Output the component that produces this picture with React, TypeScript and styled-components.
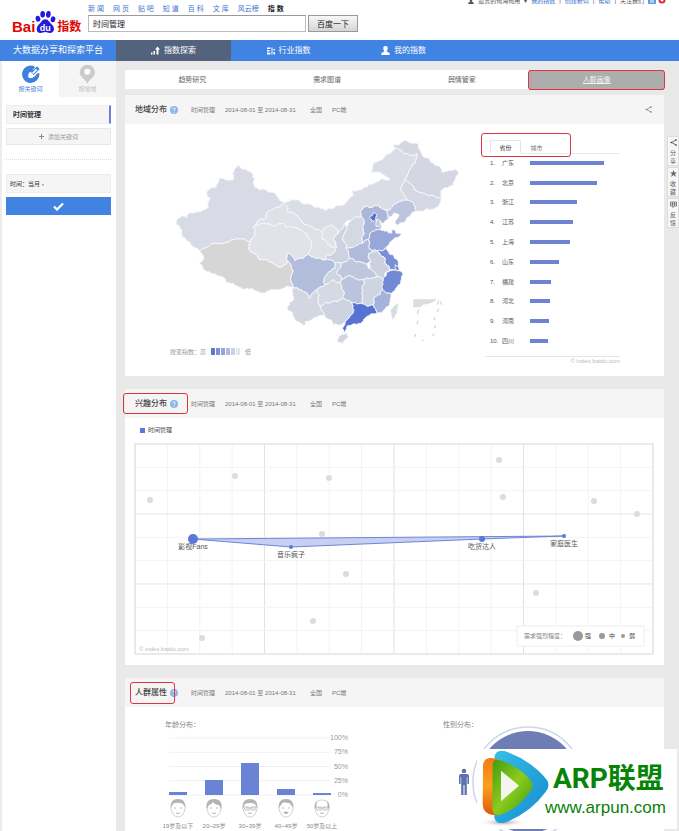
import React from "react";
import styled, { createGlobalStyle, css } from "styled-components";

const GlobalStyle = createGlobalStyle`
  *, *::after { box-sizing: border-box; }
  body { margin: 0; background: #fff; }
  body, button, input { font-family: "Liberation Sans", "Noto Sans CJK SC", sans-serif; }
  button { padding: 0; border: 0; background: none; color: inherit; cursor: pointer; }
  a { color: inherit; text-decoration: none; }
  svg { display: block; }
  h1, h2, h3, p, ol { margin: 0; padding: 0; font-weight: normal; }
`;

/* ---------- shell ---------- */
const Page = styled.div`
  position: relative;
  height: 100vh;
  overflow: hidden;
  display: flex;
  flex-direction: column;
  color: #555;
  font-size: 6px;
  line-height: 8px;
`;
const Header = styled.header`
  height: 40px;
  flex: none;
  display: flex;
  padding-left: 12px;
`;
const Logo = styled.a`
  display: flex;
  align-items: flex-end;
  width: 76px;
  height: 35px;
  color: #e10602;
  font-weight: bold;
  font-size: 15px;
  line-height: 16px;
`;
const LogoCn = styled.span`
  margin-left: 1px;
  font-size: 12px;
  line-height: 15px;
`;
const SearchArea = styled.div`
  padding-top: 4px;
`;
const Products = styled.nav`
  display: flex;
  gap: 9px;
  font-size: 7px;
  line-height: 9px;
  color: #3d74cf;
  margin-bottom: 2px;
`;
const CurrentProduct = styled.strong`
  color: #222;
`;
const SearchForm = styled.form`
  display: flex;
  gap: 2px;
`;
const SearchInput = styled.input`
  width: 218px;
  height: 17px;
  border: 1px solid #bbb;
  border-top-color: #999;
  border-radius: 0;
  padding: 0 4px;
  font-size: 8px;
  color: #222;
  outline: none;
`;
const SearchButton = styled.button`
  width: 50px;
  height: 17px;
  border: 1px solid #999;
  background: linear-gradient(#f7f7f7, #d5d5d5);
  font-size: 8px;
  color: #222;
`;
const Account = styled.div`
  display: flex;
  align-items: center;
  gap: 4px;
  height: 8px;
  margin: -3px 13px 0 auto;
  color: #555;
  white-space: nowrap;
`;
const AccountLink = styled.a`
  color: #3d74cf;
`;
const MainNav = styled.nav`
  flex: none;
  height: 21px;
  display: flex;
  background: #4183e2;
  color: #fff;
  font-size: 8px;
`;
const Slogan = styled.div`
  width: 116px;
  flex: none;
  padding-left: 13px;
  font-size: 9px;
  line-height: 21px;
`;
const NavItem = styled.a<{ $active?: boolean }>`
  width: 115px;
  display: flex;
  align-items: center;
  justify-content: center;
  gap: 4px;
  background: ${(p) => (p.$active ? "#54637d" : "transparent")};
`;
const Columns = styled.div`
  flex: 1;
  min-height: 0;
  display: flex;
`;

/* ---------- sidebar ---------- */
const Sidebar = styled.aside`
  width: 116px;
  flex: none;
  border-left: 2px solid #ececec;
  background: #fff;
`;
const ModeTabs = styled.div`
  display: grid;
  grid-template-columns: 1fr 1fr;
  height: 36px;
  margin-bottom: 8px;
`;
const ModeTab = styled.button<{ $active?: boolean }>`
  display: flex;
  flex-direction: column;
  align-items: center;
  justify-content: space-between;
  padding: 3px 0 4px;
  font-size: 6px;
  line-height: 8px;
  color: ${(p) => (p.$active ? "#3f7fdd" : "#c2c2c2")};
  background: ${(p) => (p.$active ? "#fff" : "#f5f5f5")};
`;
const SideBody = styled.div`
  display: flex;
  flex-direction: column;
  padding: 0 5px 0 4px;
`;
const Keyword = styled.div`
  height: 19px;
  padding-left: 6px;
  background: #f5f5f5;
  border: 1px solid #eee;
  border-right: 2px solid #6f7ed6;
  font-size: 7px;
  font-weight: bold;
  line-height: 17px;
  color: #333;
`;
const AddKeyword = styled.button`
  height: 17px;
  margin-top: 4px;
  display: flex;
  align-items: center;
  justify-content: center;
  gap: 4px;
  border: 1px solid #e8e8e8;
  background: #f5f5f5;
  font-size: 6px;
  color: #999;
`;
const Divider = styled.hr`
  width: 100%;
  margin: 14px 0;
  border: 0;
  border-top: 1px dotted #ddd;
`;
const TimeButton = styled.button`
  height: 19px;
  padding-left: 3px;
  border: 1px solid #ededed;
  background: #f5f5f5;
  font-size: 6px;
  text-align: left;
  color: #333;
`;
const Confirm = styled.button`
  height: 18px;
  margin-top: 4px;
  display: flex;
  align-items: center;
  justify-content: center;
  background: #4083e1;
`;

/* ---------- content ---------- */
const Main = styled.main`
  position: relative;
  flex: 1;
  min-width: 0;
  padding: 9px 15px 0 9px;
  background: #e9e9e9;
`;
const redRing = css`
  content: "";
  position: absolute;
  border: 1px solid #dc3440;
  border-radius: 3px;
  pointer-events: none;
`;
const ReportTabs = styled.nav`
  display: grid;
  grid-template-columns: repeat(4, 1fr);
  height: 19px;
  margin-bottom: 6px;
  background: #fff;
  font-size: 7px;
  line-height: 20px;
  text-align: center;
  color: #666;
`;
const ReportTab = styled.a<{ $active?: boolean }>`
  position: relative;
  ${(p) =>
    p.$active &&
    css`
      background: #adadad;
      color: #f4f4f4;
      text-decoration: underline;
      &::after { ${redRing} inset: 0 -1px 0 -1px; }
    `}
`;
const Card = styled.section`
  background: #fff;
  margin-bottom: 13px;
`;
const CardHead = styled.header`
  display: flex;
  align-items: center;
  height: 29px;
  padding: 0 12px 0 10px;
  background: #f5f5f5;
  color: #777;
`;
const TitleBox = styled.div<{ $ring?: "wide" | "tight" }>`
  position: relative;
  display: flex;
  align-items: center;
  gap: 3px;
  width: 56px;
  &::after {
    ${(p) => p.$ring && redRing}
    ${(p) => (p.$ring === "wide" ? "inset: -5px 3px -5px -12px;" : "inset: -5px 16px -6px -5px;")}
  }
`;
const CardTitle = styled.h2`
  font-size: 8px;
  line-height: 11px;
  color: #444;
  font-weight: 500;
`;
const Meta = styled.div`
  display: flex;
  gap: 10px;
  flex: 1;
  white-space: nowrap;
`;
const MetaDate = styled.span`
  width: 75px;
`;
const IconButton = styled.button`
  display: flex;
`;

/* region card */
const RegionBody = styled.div`
  display: grid;
  grid-template-columns: minmax(0, 1fr) 135px;
  column-gap: 15px;
  height: 252px;
  padding: 6px 44px 0 35px;
`;
const MapLegend = styled.div`
  display: flex;
  align-items: center;
  gap: 5px;
  padding-left: 10px;
  margin-top: 1px;
  color: #999;
`;
const Swatches = styled.div`
  display: flex;
  gap: 1px;
`;
const Swatch = styled.i<{ $color: string }>`
  width: 4px;
  height: 7px;
  background: ${(p) => p.$color};
`;
const RankTabs = styled.div`
  position: relative;
  display: flex;
  margin: 10px 0 0 5px;
  height: 14px;
  border-bottom: 1px solid #eaeaea;
  &::after { ${redRing} left: -9px; top: -7px; width: 90px; height: 24px; }
`;
const RankTab = styled.button<{ $active?: boolean }>`
  width: 31px;
  height: 14px;
  font-size: 6px;
  color: #777;
  border: 1px solid transparent;
  ${(p) =>
    p.$active &&
    css`
      border-color: #e5e5e5;
      border-bottom-color: #fff;
      color: #333;
      background: #fff;
    `}
`;
const RankList = styled.ol`
  display: grid;
  grid-template-rows: repeat(10, 1fr);
  height: 198px;
  margin-top: -1px;
  padding-left: 5px;
  list-style: none;
`;
const RankRow = styled.li`
  display: grid;
  grid-template-columns: 12px 28px 1fr;
  align-items: center;
  color: #555;
`;
const RankBar = styled.i`
  height: 4px;
  background: #6f83d3;
`;
const RankFoot = styled.p`
  border-top: 1px solid #e5e5e5;
  margin-top: 5px;
  color: #bbb;
  text-align: right;
`;

/* interest card */
const InterestBody = styled.div`
  padding: 7px 11px 10px 10px;
`;
const SeriesKey = styled.div`
  display: flex;
  align-items: center;
  gap: 3px;
  height: 10px;
  margin: 0 0 9px 5px;
  color: #444;
`;
const SeriesSquare = styled.i`
  width: 5px;
  height: 5px;
  background: #5b78d8;
`;
const ChartSvg = styled.svg`
  width: 100%;
  height: auto;
  overflow: visible;
`;

/* people card */
const PeopleBody = styled.div`
  display: grid;
  grid-template-columns: 278px 1fr;
  padding: 14px 0 0 40px;
  height: 180px;
  color: #888;
`;

/* floating tools */
const Tools = styled.div`
  position: absolute;
  right: 0;
  top: 75px;
  display: flex;
  flex-direction: column;
  gap: 1px;
`;
const Tool = styled.button`
  width: 12px;
  height: 30px;
  display: flex;
  flex-direction: column;
  align-items: center;
  gap: 3px;
  padding-top: 2px;
  border: 1px solid #ddd;
  background: #f7f7f7;
  font-size: 6px;
  line-height: 8px;
  color: #555;
`;
const Brand = styled.aside`
  position: absolute;
  left: 477px;
  bottom: 2px;
  width: 200px;
  height: 80px;
  display: flex;
  background: #fff;
  color: #078307;
`;
const BrandText = styled.div`
  margin-left: -4px;
  padding-top: 13px;
  white-space: nowrap;
`;
const BrandName = styled.div`
  margin-left: 8px;
  font: bold 28px/34px Roboto, "Noto Sans CJK SC", sans-serif;
`;
const BrandUrl = styled.div`
  font-size: 17px;
  line-height: 24px;
`;

/* ---------- map ---------- */
const provinces: [string, string, string][] = [
  ["新疆", "#d8dbe5", "50,270 65,258 80,262 110,245 145,228 150,205 140,185 168,172 175,145 195,150 220,148 215,130 238,107 262,122 285,148 285,172 300,180 325,185 350,198 372,218 350,232 320,250 310,268 280,290 285,315 272,335 240,328 190,340 150,345 118,362 95,345 75,325 65,300 50,285"],
  ["西藏", "#d6d6d7", "118,362 150,345 190,340 240,328 272,335 270,365 300,390 340,400 370,408 382,392 400,420 400,472 370,475 345,480 315,490 285,482 262,475 235,470 200,458 165,432 135,420 118,400 130,385"],
  ["青海", "#e2e3e9", "280,290 300,282 340,288 370,280 400,290 425,300 450,330 445,372 430,385 405,392 382,370 382,392 370,408 340,400 300,390 270,365 272,335 285,315"],
  ["甘肃", "#dfe1e8", "310,268 320,250 350,232 372,218 382,245 410,255 430,280 450,290 485,305 485,325 505,345 530,350 525,365 500,375 490,390 470,385 445,372 450,330 425,300 400,290 370,280 340,288 300,282 280,290"],
  ["内蒙古", "#dadde5", "372,218 430,222 470,232 520,235 560,215 580,195 575,182 620,172 660,150 690,148 665,130 635,128 640,100 670,85 690,70 705,55 730,70 770,70 765,100 745,130 735,150 722,180 740,210 700,225 680,240 665,235 655,225 610,230 605,260 575,270 555,280 535,310 512,285 500,290 485,305 450,290 430,280 410,255 382,245"],
  ["黑龙江", "#d4d7e2", "700,42 740,32 775,42 790,80 820,100 850,128 893,122 880,165 845,180 845,205 815,195 790,190 760,170 735,150 745,130 765,100 770,70 730,70 705,55"],
  ["吉林", "#d5d8e2", "735,150 760,170 790,190 815,195 845,205 840,220 800,235 768,245 755,215 740,210 722,180"],
  ["辽宁", "#bcc5dd", "680,240 700,225 740,210 755,215 768,245 740,265 715,285 705,280 718,255 700,250 685,265"],
  ["河北", "#aab6da", "610,230 655,225 665,235 680,240 685,265 670,280 660,272 660,298 630,310 625,328 605,340 608,290 605,260"],
  ["天津", "#c3cadf", "650,268 660,272 658,290 648,288"],
  ["北京", "#526ece", "628,262 640,248 652,255 648,268 635,275"],
  ["山西", "#d4d8e2", "560,290 575,270 605,260 608,290 605,340 575,355 558,355"],
  ["陕西", "#ccd2e0", "535,310 555,280 560,290 558,355 565,370 568,385 545,400 525,400 490,390 500,375 525,365 530,350 520,330"],
  ["宁夏", "#e1e3e9", "485,305 500,290 512,285 535,310 520,330 530,350 505,345 485,325"],
  ["山东", "#97a7da", "630,310 660,298 680,302 695,310 700,297 708,310 725,312 700,328 680,352 650,362 625,350 625,328"],
  ["河南", "#b0badb", "565,370 558,355 605,340 625,328 625,350 650,362 625,370 632,390 620,402 590,395 568,385"],
  ["江苏", "#7a8fd5", "650,362 680,352 700,375 715,400 712,422 690,420 675,400 670,380"],
  ["上海", "#7187d3", "706,404 716,412 714,424 706,420"],
  ["安徽", "#cbd1df", "625,370 650,362 670,380 675,400 690,420 680,425 670,448 650,440 635,420 632,390"],
  ["浙江", "#7289d5", "680,425 712,422 730,432 715,465 695,490 668,480 668,455"],
  ["湖北", "#bfc7dd", "545,400 568,385 590,395 620,402 635,420 650,440 610,450 600,450 560,440 545,450 530,430"],
  ["四川", "#b2bcdb", "382,370 405,392 430,385 445,372 470,385 490,390 525,400 525,415 500,435 490,455 495,465 470,480 450,505 435,485 400,472 400,420 382,392"],
  ["重庆", "#cfd4e1", "525,400 545,400 530,430 545,450 540,460 520,450 495,465 490,455 500,435 525,415"],
  ["贵州", "#d5d9e3", "470,480 495,465 520,450 540,460 548,505 515,515 480,530 475,510"],
  ["湖南", "#bbc4dc", "545,450 560,440 600,450 610,450 607,480 605,520 575,520 548,505 540,460"],
  ["江西", "#cfd4e1", "610,450 650,440 670,448 668,480 645,500 640,525 605,520 607,480"],
  ["福建", "#a5b2da", "668,480 695,490 690,515 650,550 640,525 645,500"],
  ["广西", "#ced3e0", "480,530 515,515 548,505 575,520 580,545 555,580 520,585 495,560"],
  ["广东", "#5773d2", "580,545 575,520 605,520 640,525 650,550 610,575 580,582 560,590 555,608 547,595 555,580"],
  ["云南", "#d3d7e2", "400,472 435,485 450,505 470,480 475,510 480,530 495,560 460,565 435,575 432,588 405,570 395,545 382,540 400,510"],
  ["海南", "#d0d5e1", "535,620 560,610 565,620 548,642 533,635"],
  ["台湾", "#d9dbe2", "700,530 715,520 712,550 700,570 693,550"],
];

type Pt = [number, number];

/* Splits each border into a ragged line; neighbours share the same result because
   the displacement depends only on the two end points. */
function ragged(a: Pt, b: Pt, depth: number): Pt[] {
  const flip = a[0] > b[0] || (a[0] === b[0] && a[1] > b[1]);
  const [p, q] = flip ? [b, a] : [a, b];
  if (depth === 0 || Math.hypot(q[0] - p[0], q[1] - p[1]) < 6) return [a];
  const s = Math.sin(p[0] * 12.9 + p[1] * 78.2 + q[0] * 37.7 + q[1] * 4.1) * 43758.5;
  const k = (s - Math.floor(s) - 0.5) * 0.42;
  const m: Pt = [(p[0] + q[0]) / 2 - (q[1] - p[1]) * k, (p[1] + q[1]) / 2 + (q[0] - p[0]) * k];
  return [...ragged(a, m, depth - 1), ...ragged(m, b, depth - 1)];
}
function outline(points: string) {
  const pts = points.split(" ").map((s) => s.split(",").map(Number) as Pt);
  return pts
    .flatMap((p, i) => ragged(p, pts[(i + 1) % pts.length], 3))
    .map((p) => p.map((n) => Math.round(n * 10) / 10).join(","))
    .join(" ");
}

const ChinaMap = () => (
  <ChartSvg viewBox="0 0 930 650" role="img" aria-label="地域分布">
    {provinces.map(([name, fill, pts]) => (
      <polygon key={name} points={outline(pts)} fill={fill} stroke="#f6f7fa" strokeWidth="3" strokeLinejoin="round" />
    ))}
    <path d="M760 508H832L812 520L790 524L780 532H760Z" fill="#dcdcdc" />
    <path d="M776 538l-4 14M774 572l-3 10M766 612v8M786 630l4 3M818 618l4-6M824 594l3-8M823 570l2-8M832 545l4-8M836 512l-4 12M842 514l3 10" stroke="#d5d5d5" strokeWidth="4" />
  </ChartSvg>
);

/* ---------- icons ---------- */
const Help = () => (
  <svg width="8" height="8" viewBox="0 0 16 16" aria-hidden="true">
    <circle cx="8" cy="8" r="8" fill="#8db5ea" />
    <path d="M5.5 6.5a2.5 2.5 0 1 1 3.6 2.2Q8 9.3 8 10.5M8 12v1.6" fill="none" stroke="#fff" strokeWidth="1.7" />
  </svg>
);
const Share = ({ size = 7, color = "#777" }: { size?: number; color?: string }) => (
  <svg width={size} height={size} viewBox="0 0 14 14" aria-hidden="true">
    <path d="M12 2L3 7l9 5" fill="none" stroke={color} strokeWidth="1.4" />
    <g fill={color}><circle cx="12" cy="2" r="1.6" /><circle cx="2.5" cy="7" r="1.6" /><circle cx="12" cy="12" r="1.6" /></g>
  </svg>
);
const Person = ({ width, height, color }: { width: number; height: number; color: string }) => (
  <svg width={width} height={height} viewBox="0 0 10 10" aria-hidden="true">
    <path d="M5 0C7 0 7.8 1.4 7.4 3.2 7 4.8 6.3 5.2 6.3 6L9.6 7.8V10H.4V7.8L3.7 6C3.7 5.2 3 4.8 2.6 3.2 2.2 1.4 3 0 5 0Z" fill={color} />
  </svg>
);
const Paw = () => (
  <svg width="21" height="25" viewBox="0 0 63 75" aria-hidden="true">
    <g fill="#2319dc">
      <ellipse cx="9" cy="26" rx="7" ry="9" transform="rotate(-12 9 26)" />
      <ellipse cx="23" cy="13" rx="7" ry="10" />
      <ellipse cx="40" cy="13" rx="7" ry="10" transform="rotate(8 40 13)" />
      <ellipse cx="54" cy="28" rx="7" ry="9" transform="rotate(14 54 28)" />
      <path d="M31 28C41 28 43 38 51 44C60 51 59 69 45 69C39 69 36 66 31 66C26 66 22 69 16 69C2 69 3 51 11 44C19 38 21 28 31 28Z" />
    </g>
    <text x="31" y="62" fill="#fff" fontSize="27" fontWeight="bold" textAnchor="middle">du</text>
  </svg>
);

/* ---------- data ---------- */
const products = ["新 闻", "网 页", "贴 吧", "知 道", "百 科", "文 库", "风云榜"];
const ranking: [string, number][] = [
  ["广东", 74], ["北京", 67], ["浙江", 47], ["江苏", 43], ["上海", 40],
  ["山东", 29], ["福建", 21], ["河北", 20], ["河南", 19], ["四川", 18],
];
const greyDots: Pt[] = [
  [15, 56], [100, 32], [194, 34], [187, 90], [211, 130], [178, 177],
  [67, 194], [364, 16], [368, 53], [459, 57], [502, 70], [401, 149],
];
const interests: [string, number, number, number][] = [
  ["影视Fans", 58, 95, 5], ["音乐疯子", 156, 103, 2], ["吃货达人", 347, 95, 3], ["家庭医生", 429, 92, 2],
];
const ages: [string, number][] = [
  ["19岁及以下", 3], ["20~29岁", 15], ["30~39岁", 32], ["40~49岁", 6], ["50岁及以上", 2],
];
const hair = [
  "M-7 0Q-8-9 0-9Q8-9 7 0Q6-4 3-5Q-3-6-5-4Z",
  "M-7 1Q-9-9 0-9Q9-9 7 1L5-3Q1-3-1-6Q-3-3-5-3Z",
  "M-7 0Q-8-9 0-9Q8-9 7 0L5-4Q0-6-5-4Z",
  "M-7 0Q-8-9 0-9Q8-9 7 0L5-3Q3-6 1-5Q-3-7-5-3Z",
  "M-7 1Q-8-5-5-7L-6 0ZM7 1Q8-5 5-7L6 0Z",
];

const Head = ({ title, ring, share }: { title: string; ring?: "wide" | "tight"; share?: boolean }) => (
  <CardHead>
    <TitleBox $ring={ring}><CardTitle>{title}</CardTitle><Help /></TitleBox>
    <Meta><span>时间管理</span><MetaDate>2014-08-01 至 2014-08-31</MetaDate><span>全国</span><span>PC端</span></Meta>
    {share && <IconButton aria-label="分享"><Share /></IconButton>}
  </CardHead>
);

const InterestChart = () => (
  <ChartSvg viewBox="0 0 518 211" role="img" aria-label="兴趣分布">
    {Array.from({ length: 17 }, (_, i) => (
      <line key={`v${i}`} x1={i * 32.375} x2={i * 32.375} y1="0" y2="210" stroke={i % 4 ? "#f3f3f3" : "#e2e2e2"} />
    ))}
    {Array.from({ length: 10 }, (_, i) => (
      <line key={`h${i}`} x1="0" x2="518" y1={i * 23.33} y2={i * 23.33} stroke={i % 3 ? "#f3f3f3" : "#e6e6e6"} />
    ))}
    <rect x="0" y="0" width="518" height="210" fill="none" stroke="#e2e2e2" />
    {greyDots.map(([x, y]) => <circle key={`${x}-${y}`} cx={x} cy={y} r="3" fill="#dcdcdc" />)}
    <path d="M58 95L429 92L347 95L156 103Z" fill="#c6d0f3" stroke="#7084d6" strokeLinejoin="round" />
    {interests.map(([name, x, y, r]) => (
      <g key={name}>
        <circle cx={x} cy={y} r={r} fill="#5b78d8" />
        <text x={x} y={y + 10} fontSize="7" textAnchor="middle" fill="#555">{name}</text>
      </g>
    ))}
    <text x="4" y="207" fontSize="6" fill="#bbb">© index.baidu.com</text>
    <rect x="382" y="182" width="127" height="20" fill="#fff" stroke="#eee" />
    <g fontSize="6" fill="#888">
      <text x="389" y="194">需求强烈程度：</text>
      <circle cx="443" cy="192" r="5" fill="#999" />
      <circle cx="467" cy="192" r="3" fill="#999" />
      <circle cx="488" cy="192" r="2" fill="#999" />
      <g fill="#444"><text x="450" y="194">强</text><text x="474" y="194">中</text><text x="494" y="194">弱</text></g>
    </g>
  </ChartSvg>
);

const AgeChart = () => (
  <svg width="195" height="106" viewBox="165 729 195 106" overflow="visible" role="img" aria-label="年龄分布">
    {[100, 75, 50, 25, 0].map((v, i) => (
      <g key={v}>
        <line x1="169" x2="331" y1={738 + i * 14.25} y2={738 + i * 14.25} stroke="#f0f0f0" />
        <text x="348" y={740 + i * 14.25} fontSize="7" textAnchor="end" fill="#999">{v}%</text>
      </g>
    ))}
    {ages.map(([label, h], i) => (
      <g key={label}>
        <rect x={169 + i * 36} y={795 - h} width="18" height={h} fill="#6b83d4" />
        <g transform={`translate(${178 + i * 36} 808)`}>
          <path d="M-7-2Q-7-8 0-8Q7-8 7-2Q8 0 7 1Q5 9 0 9Q-5 9-7 1Q-8 0-7-2Z" fill="#fff" stroke="#bbb" strokeWidth=".7" />
          <path d={hair[i]} fill="#b4b4b4" />
          <path d="M-4 0h2M2 0h2M-2 5Q0 6 2 5" stroke="#aaa" strokeWidth=".8" fill="none" />
          {(i === 2 || i === 4) && <path d="M-6-1h5v3h-4zM1-1h5l-1 3H1zM-1 0h2" fill="none" stroke="#aaa" strokeWidth=".7" />}
          {i === 3 && <path d="M-3 5Q0 2 3 5Z" fill="#aaa" />}
        </g>
        <text x={178 + i * 36} y="828" fontSize="6" textAnchor="middle" fill="#888">{label}</text>
      </g>
    ))}
  </svg>
);

const GenderChart = () => (
  <svg width="160" height="122" viewBox="443 729 160 122" overflow="visible" role="img" aria-label="性别分布">
    <circle cx="528" cy="782" r="55" fill="#fff" stroke="#cdd6ec" strokeWidth="1.5" />
    <circle cx="528" cy="782" r="51" fill="#6f7db5" />
    <g fill="#5d70b0">
      <circle cx="464" cy="771" r="2.3" />
      <path d="M461 774h6q2 0 2 2v8h-1.6v-7h-.6v18h-2.3v-10h-1v10h-2.3v-18h-.6v7H459v-8q0-2 2-2z" />
    </g>
  </svg>
);

export default function App() {
  return (
    <Page>
      <GlobalStyle />
      <Header>
        <Logo href="#" aria-label="百度指数"><span>Bai</span><Paw /><LogoCn>指数</LogoCn></Logo>
        <SearchArea>
          <Products>
            {products.map((p) => <a key={p} href="#">{p}</a>)}
            <CurrentProduct>指 数</CurrentProduct>
          </Products>
          <SearchForm onSubmit={(e) => e.preventDefault()}>
            <SearchInput aria-label="关键词" defaultValue="时间管理" />
            <SearchButton>百度一下</SearchButton>
          </SearchForm>
        </SearchArea>
        <Account>
          <Person width={6} height={6} color="#555" />
          <span>最普的何海何用</span><span>▾</span>
          <AccountLink href="#">我的指数</AccountLink>|
          <AccountLink href="#">创建新词</AccountLink>|
          <AccountLink href="#">帮助</AccountLink>|
          <span>关注我们</span>
          <svg width="18" height="8" viewBox="0 0 18 8" aria-hidden="true">
            <rect x="0" y="0" width="8" height="7" rx="1" fill="#5d9be8" />
            <path d="M2 5h4M2 3h4" stroke="#fff" />
            <circle cx="14" cy="3" r="3.5" fill="#cf3440" /><circle cx="14" cy="3" r="1.5" fill="#fff" />
          </svg>
        </Account>
      </Header>

      <MainNav>
        <Slogan>大数据分享和探索平台</Slogan>
        <NavItem href="#" $active>
          <svg width="9" height="9" viewBox="0 0 18 18" aria-hidden="true"><path d="M0 13h3v4H0zM5 10h3v7H5zM11 17V7H8l5-6 5 6h-3v10z" fill="#fff" /></svg>
          指数探索
        </NavItem>
        <NavItem href="#">
          <svg width="8" height="8" viewBox="0 0 16 16" aria-hidden="true"><path d="M0 1h7v3H0zM0 6h5v3H0zM0 11h7v4H0zM9 1h2v14H9zM13 4h3v3h-3zM13 10h3v5h-3z" fill="#fff" /></svg>
          行业指数
        </NavItem>
        <NavItem href="#"><Person width={9} height={9} color="#fff" />我的指数</NavItem>
      </MainNav>

      <Columns>
        <Sidebar>
          <ModeTabs>
            <ModeTab $active>
              <svg width="18" height="20" viewBox="0 0 54 60" aria-hidden="true">
                <path d="M37 7A26 26 0 1 0 52 27L47 28L34 41L17 46L20 28L38 11Z" fill="#3f7fdd" />
                <path d="M45 7L53 15L35 33L27 25Z" fill="#3f7fdd" />
                <path d="M25 29L32 36Q27 42 19 41Q24 36 25 29Z" fill="#fff" />
                <path d="M30 26L34 30L46 18L42 14Z" fill="#fff" />
                <circle cx="27" cy="33" r="14" fill="none" stroke="#3f7fdd" strokeWidth="8" strokeDasharray="62 26" strokeDashoffset="-8" />
              </svg>
              按关键词
            </ModeTab>
            <ModeTab>
              <svg width="17" height="20" viewBox="0 0 51 60" aria-hidden="true">
                <path d="M25 2A23 23 0 0 1 48 25C48 40 34 41 25 59C16 41 2 40 2 25A23 23 0 0 1 25 2Z" fill="#cbcbcb" />
                <circle cx="25" cy="23" r="9" fill="#fff" />
              </svg>
              按地域
            </ModeTab>
          </ModeTabs>
          <SideBody>
            <Keyword>时间管理</Keyword>
            <AddKeyword>
              <svg width="5" height="5" viewBox="0 0 5 5" aria-hidden="true"><path d="M0 2.5h5M2.5 0v5" stroke="#888" /></svg>
              添加关键词
            </AddKeyword>
            <Divider />
            <TimeButton>时间：当月 ›</TimeButton>
            <Confirm aria-label="确定">
              <svg width="11" height="9" viewBox="0 0 22 18" aria-hidden="true"><path d="M2 9l6 6L20 3" fill="none" stroke="#fff" strokeWidth="4.5" /></svg>
            </Confirm>
          </SideBody>
        </Sidebar>

        <Main>
          <ReportTabs>
            <ReportTab href="#">趋势研究</ReportTab>
            <ReportTab href="#">需求图谱</ReportTab>
            <ReportTab href="#">舆情管家</ReportTab>
            <ReportTab href="#" $active>人群画像</ReportTab>
          </ReportTabs>

          <Card>
            <Head title="地域分布" share />
            <RegionBody>
              <div>
                <ChinaMap />
                <MapLegend>
                  搜索指数：高
                  <Swatches>
                    {["#5f78cb", "#7d91d3", "#95a5da", "#afbadf", "#cbd0e3", "#e4e5ea"].map((c) => <Swatch key={c} $color={c} />)}
                  </Swatches>
                  低
                </MapLegend>
              </div>
              <div>
                <RankTabs><RankTab $active>省份</RankTab><RankTab>城市</RankTab></RankTabs>
                <RankList>
                  {ranking.map(([name, w], i) => (
                    <RankRow key={name}><span>{i + 1}.</span><span>{name}</span><RankBar style={{ width: w }} /></RankRow>
                  ))}
                </RankList>
                <RankFoot>© index.baidu.com</RankFoot>
              </div>
            </RegionBody>
          </Card>

          <Card>
            <Head title="兴趣分布" ring="wide" />
            <InterestBody>
              <SeriesKey><SeriesSquare />时间管理</SeriesKey>
              <InterestChart />
            </InterestBody>
          </Card>

          <Card>
            <Head title="人群属性" ring="tight" />
            <PeopleBody>
              <div><h3>年龄分布：</h3><AgeChart /></div>
              <div><h3>性别分布：</h3><GenderChart /></div>
            </PeopleBody>
          </Card>

          <Tools>
            <Tool><Share color="#333" /><span>分<br />享</span></Tool>
            <Tool>
              <svg width="7" height="7" viewBox="0 0 14 14" aria-hidden="true"><path d="M7 0l2 5h5l-4 3 2 6-5-4-5 4 2-6-4-3h5z" fill="#666" /></svg>
              <span>收<br />藏</span>
            </Tool>
            <Tool>
              <svg width="7" height="7" viewBox="0 0 14 14" aria-hidden="true"><path d="M1 2h12v8H8l-2 3v-3H1zM1 6h12M5 2v8M9 2v8" fill="none" stroke="#666" strokeWidth="1.5" /></svg>
              <span>反<br />馈</span>
            </Tool>
          </Tools>
        </Main>
      </Columns>

      <Brand>
        <svg width="72" height="80" viewBox="142 144 216 240" aria-hidden="true">
          <defs>
            <linearGradient id="blue" x2="1" y2="1"><stop stopColor="#35bfe6" /><stop offset="1" stopColor="#158bcf" /></linearGradient>
            <linearGradient id="orange" x2="0" y2="1"><stop stopColor="#f57a12" /><stop offset=".5" stopColor="#f9a11b" /><stop offset="1" stopColor="#e0570c" /></linearGradient>
            <linearGradient id="green" x2="1" y2="1"><stop stopColor="#3f9d10" /><stop offset=".5" stopColor="#8ccb1c" /><stop offset="1" stopColor="#3d9a10" /></linearGradient>
            <radialGradient id="shade"><stop stopColor="#999" /><stop offset="1" stopColor="#fff" stopOpacity="0" /></radialGradient>
          </defs>
          <ellipse cx="220" cy="364" rx="72" ry="13" fill="url(#shade)" />
          <path d="M194 170Q197 145 224 150Q305 178 352 237Q362 253 350 270Q304 334 228 364Q200 372 194 350Z" fill="url(#blue)" />
          <path d="M160 195Q162 168 186 171L215 178V340L190 342Q161 338 159 312Z" fill="url(#orange)" />
          <path d="M189 192Q190 169 216 179Q280 203 306 244Q313 257 303 270Q266 322 212 342Q190 347 188 325Z" fill="url(#green)" />
          <path d="M214 209L268 254L214 301Z" fill="#f3f6ee" />
        </svg>
        <BrandText>
          <BrandName>ARP联盟</BrandName>
          <BrandUrl>www.arpun.com</BrandUrl>
        </BrandText>
      </Brand>
    </Page>
  );
}
